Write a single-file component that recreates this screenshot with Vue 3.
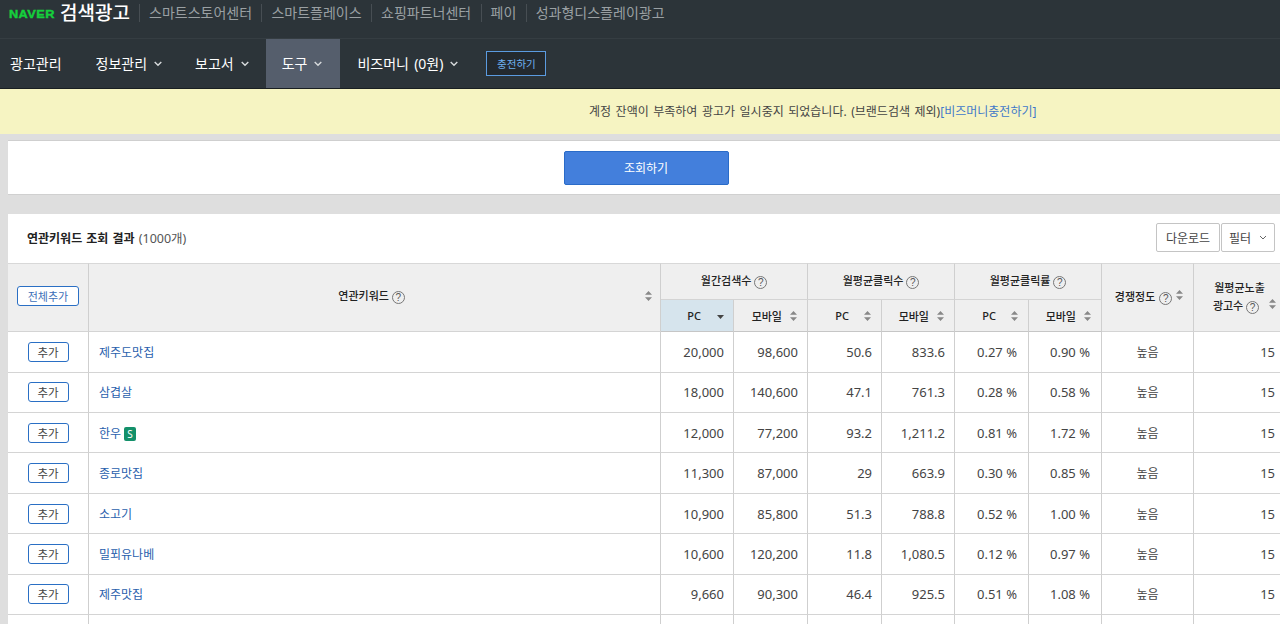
<script setup>
const menu = [
  { label: '정보관리', arrow: true },
  { label: '보고서', arrow: true },
  { label: '도구', arrow: true, active: true },
  { label: '비즈머니 (0원)', arrow: true, wide: true }
]
const links = ['스마트스토어센터', '스마트플레이스', '쇼핑파트너센터', '페이', '성과형디스플레이광고']
const subs = [
  { t: '모바일', pc: false }, { t: 'PC', pc: true }, { t: '모바일', pc: false }, { t: 'PC', pc: true }, { t: '모바일', pc: false }
]
const rows = [
  ['제주도맛집', '20,000', '98,600', '50.6', '833.6', '0.27 %', '0.90 %'],
  ['삼겹살', '18,000', '140,600', '47.1', '761.3', '0.28 %', '0.58 %'],
  ['한우', '12,000', '77,200', '93.2', '1,211.2', '0.81 %', '1.72 %', true],
  ['종로맛집', '11,300', '87,000', '29', '663.9', '0.30 %', '0.85 %'],
  ['소고기', '10,900', '85,800', '51.3', '788.8', '0.52 %', '1.00 %'],
  ['밀푀유나베', '10,600', '120,200', '11.8', '1,080.5', '0.12 %', '0.97 %'],
  ['제주맛집', '9,660', '90,300', '46.4', '925.5', '0.51 %', '1.08 %'],
  ['', '', '', '', '', '', '']
]
</script>

<template>
  <div class="page">
    <header class="top">
      <span class="naver">NAVER</span>
      <span class="brand">검색광고</span>
      <nav class="links">
        <a v-for="l in links" :key="l" class="link">{{ l }}</a>
      </nav>
    </header>
    <nav class="menu">
      <a class="mi first">광고관리</a>
      <a v-for="m in menu" :key="m.label" class="mi" :class="{ active: m.active, wide: m.wide }">
        {{ m.label }}
        <svg class="chev" width="8" height="6" viewBox="0 0 8 6"><path d="M.7 1l3.300 3.300L7.300 1" fill="none" stroke="currentColor" stroke-width="1.4"/></svg>
      </a>
      <button class="charge">충전하기</button>
    </nav>
    <div class="notice">
      계정 잔액이 부족하여 광고가 일시중지 되었습니다. (브랜드검색 제외)<a class="nlink">[비즈머니충전하기]</a>
    </div>
    <section class="search">
      <button class="query">조회하기</button>
    </section>
    <section class="card">
      <div class="card-head">
        <div class="title"><b>연관키워드 조회 결과</b> <span>(1000개)</span></div>
        <div class="actions">
          <button class="act">다운로드</button>
          <button class="act filter">필터
            <svg width="8" height="5" viewBox="0 0 8 5"><path d="M1 1l3 3 3-3" fill="none" stroke="#666" stroke-width="1"/></svg>
          </button>
        </div>
      </div>
      <table class="grid">
        <colgroup>
          <col class="w81"><col class="w572"><col class="w73"><col class="w74">
          <col class="w74"><col class="w73"><col class="w74"><col class="w73">
          <col class="w92"><col class="w92">
        </colgroup>
        <thead>
          <tr class="h1">
            <th rowspan="2" class="all"><button class="addall">전체추가</button></th>
            <th rowspan="2" class="kw">연관키워드 <i class="q">?</i>
              <svg class="sort abs" width="7" height="10" viewBox="0 0 7 10"><path d="M3.500 0L7 3.800H0zM3.500 10L0 6.200h7z" fill="#888"/></svg>
            </th>
            <th colspan="2">월간검색수 <i class="q">?</i></th>
            <th colspan="2">월평균클릭수 <i class="q">?</i></th>
            <th colspan="2">월평균클릭률 <i class="q">?</i></th>
            <th rowspan="2" class="comp">경쟁정도 <i class="q">?</i>
              <svg class="sort" width="7" height="10" viewBox="0 0 7 10"><path d="M3.500 0L7 3.800H0zM3.500 10L0 6.200h7z" fill="#888"/></svg>
            </th>
            <th rowspan="2" class="last">월평균노출<br><span class="l2">광고수 <i class="q">?</i></span>
              <svg class="sort abs2" width="7" height="10" viewBox="0 0 7 10"><path d="M3.500 0L7 3.800H0zM3.500 10L0 6.200h7z" fill="#888"/></svg>
            </th>
          </tr>
          <tr class="h2">
            <th class="sorted"><span class="lab pc">PC</span>
              <svg class="down" width="7" height="4" viewBox="0 0 7 4"><path d="M0 0h7L3.500 4z" fill="#444"/></svg>
            </th>
            <th v-for="(c, i) in subs" :key="i">
              <span class="lab" :class="{ pc: c.pc }">{{ c.t }}</span>
              <svg class="sort" width="7" height="10" viewBox="0 0 7 10"><path d="M3.500 0L7 3.800H0zM3.500 10L0 6.200h7z" fill="#888"/></svg>
            </th>
          </tr>
        </thead>
        <tbody>
          <tr v-for="(r, i) in rows" :key="i">
            <td class="c"><button v-if="r[0]" class="add">추가</button></td>
            <td class="name"><a>{{ r[0] }}</a><span v-if="r[7]" class="s">S</span></td>
            <td v-for="n in 6" :key="n" class="num" :class="{ pct: n > 4 }">{{ r[n] }}</td>
            <td class="c dim">{{ r[0] ? '높음' : '' }}</td>
            <td class="num fifteen">{{ r[0] ? '15' : '' }}</td>
          </tr>
        </tbody>
      </table>
    </section>
  </div>
</template>

<style>
body { margin: 0; }
</style>

<style scoped>
.page {
  width: 1280px; height: 624px; overflow: hidden; background: #dedede;
  font-family: "Noto Sans", "Noto Sans CJK KR", sans-serif; color: #333;
}
button { font-family: inherit; cursor: pointer; padding: 0; }
.top {
  height: 38px; background: #2c3439; display: flex; align-items: flex-start;
  padding: 0 0 0 9px; border-bottom: 1px solid #353d42;
}
.naver { font: 900 11px/1 "Liberation Sans", sans-serif; color: #15d03c; margin-top: 9px; letter-spacing: 0.35px; width: 51px; transform: scaleX(1.16); transform-origin: left; -webkit-text-stroke: .4px #15d03c; }
.brand { font-size: 19px; font-weight: 500; color: #fff; line-height: 27px; width: 70px; white-space: nowrap; }
.links { display: flex; margin-left: 9px; margin-top: 4px; }
.link { font-size: 14px; line-height: 18px; color: #9aa0a3; padding: 0 9.4px 0 9px; border-left: 1px solid #474e53; }
.menu {
  height: 49px; background: #2c3439; display: flex; align-items: stretch;
  border-bottom: 1px solid #191f22;
}
.mi { font-size: 14px; color: #fff; display: flex; align-items: center; gap: 7px; padding: 0 17px 0 16px; line-height: 49px; }
.mi.first { padding: 0 18px 0 10px; }
.mi.active { background: #555e6c; padding-right: 18px; }
.mi.wide { word-spacing: 1.5px; padding-left: 17px; }
.chev { color: #d7dadc; }
.charge {
  align-self: center; margin-left: 11px; width: 60px; height: 25px; background: #23292e;
  border: 1px solid #5b9be0; color: #6fb0ee; font-size: 10.5px;
}
.notice {
  height: 45px; background: #f6f4c2; box-sizing: border-box; padding-left: 589px;
  font-size: 12px; word-spacing: 1.4px; line-height: 45px; color: #444;
}
.nlink { color: #3f78c9; }
.search {
  margin: 6px 0 0 8px; height: 55px; background: #fff; display: flex; justify-content: center;
  border-top: 1px solid #cfcfcf; box-sizing: border-box; padding-top: 10px; padding-left: 4px;
  border-bottom: 1px solid #d0d0d0;
}
.query {
  width: 165px; height: 34px; background: #437fdc; border: 1px solid #2a6bc8; border-radius: 2px;
  color: #fff; font-size: 12px;
}
.card { margin: 19px 0 0 8px; background: #fff; width: 1290px; }
.card-head { height: 49px; display: flex; align-items: center; justify-content: space-between; padding: 0 5px 2px 19px; width: 1272px; box-sizing: border-box; }
.title { font-size: 12px; color: #222; word-spacing: 1px; }
.title b { font-weight: 700; }
.title span { color: #555; font-size: 12.5px; }
.actions { display: flex; gap: 1px; }
.act { height: 29px; width: 64px; background: #fff; border: 1px solid #c4c4c4; border-radius: 2px; font-size: 12px; color: #444; }
.filter { width: 54px; display: flex; align-items: center; justify-content: center; gap: 8px; }
.grid { border-collapse: separate; border-spacing: 0; table-layout: fixed; width: 1278px; }
.w81 { width: 81px; } .w572 { width: 572px; } .w73 { width: 73px; } .w74 { width: 74px; } .w92 { width: 92px; }
th, td { box-sizing: border-box; border-right: 1px solid #cfcfcf; border-bottom: 1px solid #d4d4d4; padding: 0; }
th { background: #efefef; font-size: 11px; font-weight: 500; color: #222; text-align: center; position: relative; }
thead tr.h1 th { border-top: 1px solid #d8d8d8; height: 37px; padding-bottom: 2px; }
thead tr.h2 th { height: 32.3px; border-bottom-color: #c6c6c6; padding: 0; }
.last { line-height: 18px; }
.l2 { display: inline-block; margin-right: 7px; }
thead tr.h1 th.kw { padding: 0 6px 4px 0; }
thead tr.h1 th.all { padding-bottom: 3px; }
.q {
  display: inline-block; box-sizing: border-box; width: 13px; height: 13px; border: 1px solid #777; border-radius: 50%;
  font: normal 10px/11px "Liberation Sans", sans-serif; text-align: center; color: #555; vertical-align: -1px;
}
.sort { margin-left: 2px; }
.abs { position: absolute; right: 8px; top: 27px; margin: 0; }
.abs2 { position: absolute; right: 9px; top: 35px; margin: 0; }
.comp { padding-left: 3px; }
.comp .q { margin-left: 1px; }
.comp .sort { vertical-align: 1px; margin-left: 4px; }
.h2 th { text-align: left; }
.lab { position: absolute; right: 25px; top: 8px; }
.lab.pc { right: 32px; }
.h2 .sort { position: absolute; right: 10px; top: 11px; margin: 0; }
.sorted { background: #d6e4ed !important; }
.down { position: absolute; right: 9px; top: 15px; }
.addall {
  width: 62px; height: 20px; border: 1px solid #2a6fc4; border-radius: 3px; background: #fff;
  color: #3d6fb8; font-size: 11px;
}
td { height: 40.4px; font-size: 13px; background: #fff; }
.c { text-align: center; }
.dim { font-size: 12px; color: #444; }
.add {
  width: 41px; height: 20px; border: 1px solid #2a6fc4; border-radius: 3px; background: #fff;
  color: #444; font-size: 11.5px;
}
.name { padding-left: 10px; font-size: 12px; color: #2a5fad; }
.s {
  display: inline-block; width: 12px; height: 14px; margin-left: 3px; background: #13906a; border-radius: 2px;
  color: #fff; font-size: 10px; line-height: 14px; text-align: center;
}
.num { text-align: right; padding-right: 9px; color: #444; font-size: 13px; }
.pct { padding-right: 11px; }
.fifteen { padding-right: 10px; }
</style>
